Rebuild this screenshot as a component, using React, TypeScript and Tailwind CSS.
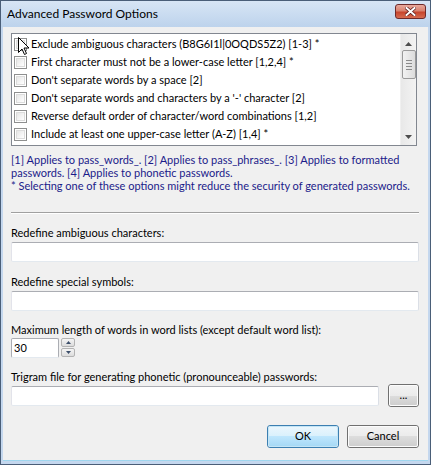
import React from "react"

const options = [
  "Exclude ambiguous characters (B8G6I1l|0OQDS5Z2) [1-3] *",
  "First character must not be a lower-case letter [1,2,4] *",
  "Don't separate words by a space [2]",
  "Don't separate words and characters by a '-' character [2]",
  "Reverse default order of character/word combinations [1,2]",
  "Include at least one upper-case letter (A-Z) [1,4] *",
]

function Checkbox() {
  return (
    <span className="flex h-[13px] w-[13px] shrink-0 items-center justify-center border border-[#8e8f8f] bg-white">
      <span className="h-[9px] w-[9px] border border-[#dcdcdc] bg-gradient-to-br from-[#e6e6e6] to-white" />
    </span>
  )
}

function Arrow({ up }: { up?: boolean }) {
  return (
    <svg width="7" height="4" viewBox="0 0 7 4">
      {up ? <path d="M0 4 L3.5 0 L7 4 Z" fill="#4d4d4d" /> : <path d="M0 0 L3.5 4 L7 0 Z" fill="#4d4d4d" />}
    </svg>
  )
}

function TextBox({ className = "" }: { className?: string }) {
  return (
    <div
      className={
        "h-[20px] rounded-[2px] border border-[#abadb3] border-l-[#e2e3ea] border-r-[#dbdfe6] border-b-[#e3e9ef] bg-white " +
        className
      }
    />
  )
}

function Label({ children, className = "" }: { children: React.ReactNode; className?: string }) {
  return <div className={"h-[15px] leading-[15px] text-black " + className}>{children}</div>
}

function PushButton({ children, primary, className = "" }: { children: React.ReactNode; primary?: boolean; className?: string }) {
  return (
    <button
      className={
        "relative flex items-center justify-center rounded-[3px] border text-black " +
        (primary ? "border-[#3c7fb1] " : "border-[#707070] ") +
        className
      }
    >
      <span
        className={
          "absolute inset-0 rounded-[2px] border " +
          (primary
            ? "border-[#c4e5f6] bg-[linear-gradient(to_bottom,#eaf6fd_0%,#d9f0fc_50%,#bee6fd_50%,#a7d9f5_100%)]"
            : "border-[#fcfcfc] bg-[linear-gradient(to_bottom,#f2f2f2_0%,#ebebeb_50%,#dddddd_50%,#cfcfcf_100%)]")
        }
      />
      <span className="relative">{children}</span>
    </button>
  )
}

export default function App() {
  return (
    <div
      className="relative flex h-[465px] w-[431px] flex-col overflow-hidden border border-[#4a5e78] bg-[#c4d7ee] text-[11px]"
      style={{ fontFamily: 'Lato, "Liberation Sans", Arial, sans-serif' }}
    >
      {/* title bar */}
      <div className="flex h-[26px] shrink-0 items-center justify-between bg-gradient-to-b from-[#d7e5f5] to-[#bdd3ec] pl-[6px] pr-[4px]">
        <span className="text-[12px] text-black">Advanced Password Options</span>
        <div className="mb-[5px] flex h-[15px] w-[31px] items-center justify-center rounded-[3px] border border-[#6e2a2a] bg-[linear-gradient(to_bottom,#e8a99d_0%,#d9826f_45%,#c7452d_55%,#d56b50_100%)]">
          <svg width="11" height="9" viewBox="0 0 11 9">
            <path d="M1.5 1 L9.5 8 M9.5 1 L1.5 8" stroke="#5a1a1a" strokeWidth="3.4" strokeLinecap="square" />
            <path d="M1.5 1 L9.5 8 M9.5 1 L1.5 8" stroke="#ffffff" strokeWidth="2" strokeLinecap="square" />
          </svg>
        </div>
      </div>

      {/* client */}
      <div className="mx-[2px] mb-[3px] flex flex-1 flex-col border-b border-[#9fd6ee] bg-[#f0f0f0] pl-[8px] pr-[9px] pt-[6px]">
        {/* list */}
        <div className="flex h-[113px] w-[406px] border border-[#828790] bg-white">
          <div className="flex-1 pl-[2px] pt-[1px]">
            {options.map((o) => (
              <div key={o} className="flex h-[18px] items-center gap-[4px] whitespace-nowrap">
                <Checkbox />
                <span className="text-black">{o}</span>
              </div>
            ))}
          </div>
          <div className="flex w-[16px] flex-col items-center border-l border-[#f0f0f0] bg-gradient-to-r from-[#e8e8e8] to-[#f3f3f3] pt-[8px]">
            <Arrow up />
            <div className="mt-[4px] flex h-[29px] w-[14px] flex-col items-center justify-center gap-[2px] rounded-[2px] border border-[#9a9a9a] bg-gradient-to-r from-[#f2f2f2] to-[#dcdcdc]">
              <span className="h-px w-[6px] bg-[#8a8a8a]" />
              <span className="h-px w-[6px] bg-[#8a8a8a]" />
              <span className="h-px w-[6px] bg-[#8a8a8a]" />
              <span className="h-px w-[6px] bg-[#8a8a8a]" />
            </div>
            <div className="flex-1" />
            <div className="mb-[6px]">
              <Arrow />
            </div>
          </div>
        </div>

        {/* notes */}
        <div className="mt-[7px] whitespace-nowrap leading-[13px] text-[#1b1b8a]">
          <p>[1] Applies to pass_words_. [2] Applies to pass_phrases_. [3] Applies to formatted</p>
          <p>passwords. [4] Applies to phonetic passwords.</p>
          <p>* Selecting one of these options might reduce the security of generated passwords.</p>
        </div>

        <div className="mt-[20px] h-[2px] border-t border-[#a0a0a0] border-b border-b-white" />

        <Label className="mt-[11px]">Redefine ambiguous characters:</Label>
        <TextBox className="mt-[2px]" />

        <Label className="mt-[12px]">Redefine special symbols:</Label>
        <TextBox className="mt-[2px]" />

        <Label className="mt-[11px]">Maximum length of words in word lists (except default word list):</Label>
        <div className="mt-[1px] flex items-start gap-[2px]">
          <div className="flex h-[20px] w-[48px] items-center rounded-[2px] border border-[#abadb3] border-b-[#e3e9ef] bg-white pl-[2px] text-black">
            30
          </div>
          <div className="flex flex-col gap-[1px]">
            <div className="flex h-[9px] w-[14px] items-center justify-center rounded-[2px] border border-[#b3b3b3] bg-gradient-to-b from-[#f5f5f5] to-[#dcdcdc]">
              <svg width="5" height="3" viewBox="0 0 5 3">
                <path d="M0 3 L2.5 0 L5 3 Z" fill="#3c4e6a" />
              </svg>
            </div>
            <div className="flex h-[9px] w-[14px] items-center justify-center rounded-[2px] border border-[#b3b3b3] bg-gradient-to-b from-[#f5f5f5] to-[#dcdcdc]">
              <svg width="5" height="3" viewBox="0 0 5 3">
                <path d="M0 0 L2.5 3 L5 0 Z" fill="#3c4e6a" />
              </svg>
            </div>
          </div>
        </div>

        <Label className="mt-[11px]">Trigram file for generating phonetic (pronounceable) passwords:</Label>
        <div className="flex items-center gap-[9px]">
          <TextBox className="w-[368px]" />
          <PushButton className="h-[23px] w-[31px] text-[11px]">...</PushButton>
        </div>

        <div className="mt-[18px] flex justify-end gap-[8px]">
          <PushButton primary className="h-[23px] w-[72px]">
            OK
          </PushButton>
          <PushButton className="h-[23px] w-[72px]">Cancel</PushButton>
        </div>
      </div>

      {/* mouse pointer */}
      <svg className="absolute left-[17px] top-[36px]" width="12" height="19" viewBox="0 0 12 19">
        <path d="M0.5 0.5 L0.5 15.5 L4 12 L6.5 17.5 L8.5 16.5 L6 11 L11 11 Z" fill="#ffffff" stroke="#000000" strokeWidth="1" strokeLinejoin="round" />
      </svg>
    </div>
  )
}
